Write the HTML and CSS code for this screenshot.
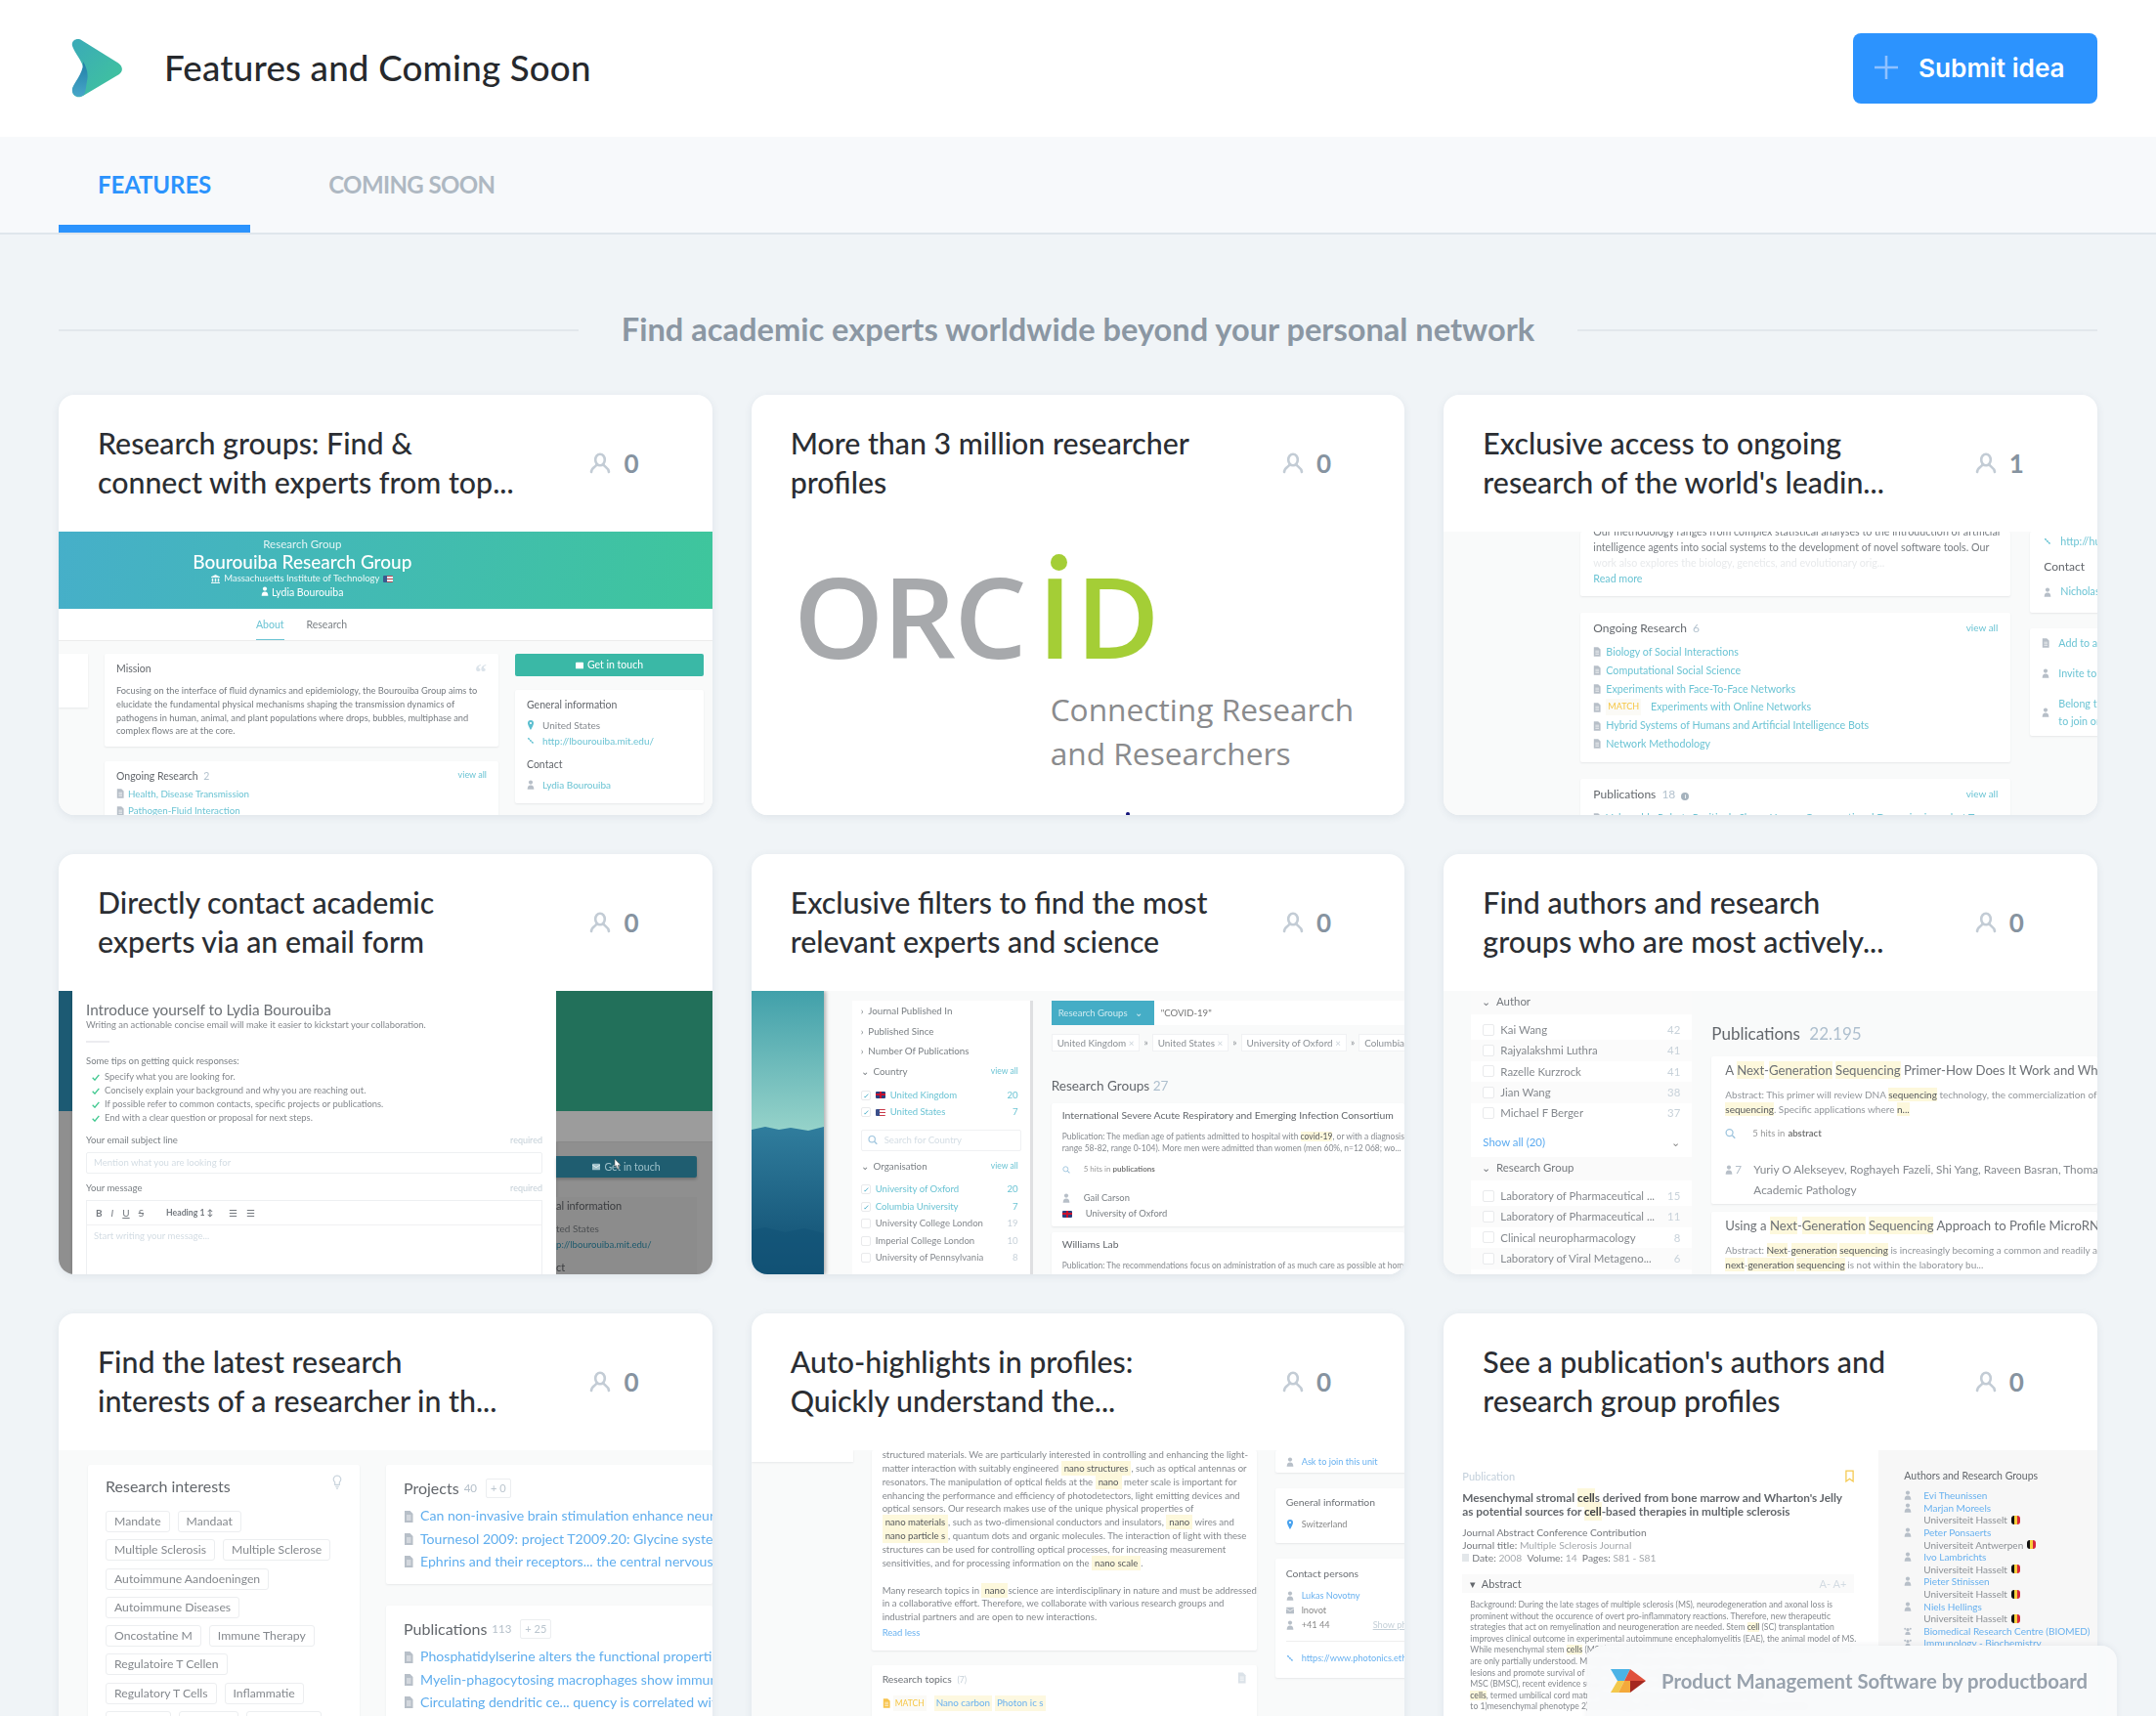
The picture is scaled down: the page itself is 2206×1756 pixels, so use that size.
FILE: index.html
```html
<!DOCTYPE html>
<html lang="en">
<head>
<meta charset="utf-8">
<title>Features and Coming Soon</title>
<link rel="stylesheet" href="styles.css">
</head>
<body>
<svg class="defs" width="0" height="0">
  <defs>
    <symbol id="i-vote" viewBox="0 0 22 22"><g fill="none" stroke="#c3ccd5" stroke-width="2.600" stroke-linecap="round"><ellipse cx="11" cy="7.500" rx="4.800" ry="5.800"/><path d="M7.500 12.500C6.500 15 2.500 15 2 20M14.500 12.500c1 2.500 5 2.500 5.500 7.500"/></g></symbol>
    <symbol id="i-person" viewBox="0 0 10 12"><circle cx="5" cy="3" r="2.600"/><path d="M.8 12c0-3.600 1.400-5.400 4.200-5.400S9.200 8.400 9.200 12z"/></symbol>
    <symbol id="i-doc" viewBox="0 0 10 12"><path d="M1 0h5.500L9.500 3v9H1z"/><path d="M3 5h4.500M3 7h4.500M3 9h4.500" stroke="#fff" stroke-width=".8"/></symbol>
    <symbol id="i-check" viewBox="0 0 12 10"><path d="M1 5.500 4.500 9 11 1" fill="none" stroke="#3fc88f" stroke-width="2"/></symbol>
    <symbol id="i-search" viewBox="0 0 12 12"><circle cx="5" cy="5" r="3.800" fill="none" stroke="#9fc5de" stroke-width="1.400"/><path d="m8 8 3.200 3.200" stroke="#9fc5de" stroke-width="1.600"/></symbol>
    <symbol id="i-pin" viewBox="0 0 8 12"><path d="M4 0a3.600 3.600 0 0 1 3.600 3.600C7.600 6.400 4 12 4 12S.4 6.400.4 3.600A3.600 3.600 0 0 1 4 0z"/><circle cx="4" cy="3.600" r="1.300" fill="#fff"/></symbol>
    <symbol id="i-link" viewBox="0 0 12 12"><path d="m2 2 8 8" fill="none" stroke="currentColor" stroke-width="2.200" stroke-dasharray="3 1"/></symbol>
    <symbol id="i-mail" viewBox="0 0 12 10"><rect width="12" height="10" rx="1"/><path d="m0 2 6 4 6-4" fill="none" stroke="#fff" stroke-width="1"/></symbol>
    <symbol id="i-bank" viewBox="0 0 12 12"><path d="M6 0l6 3v1H0V3zM1 5h2v5H1zM5 5h2v5H5zM9 5h2v5H9zM0 10.500h12V12H0z"/></symbol>
    <symbol id="i-group" viewBox="0 0 12 12"><circle cx="6" cy="4" r="2.400"/><circle cx="1.800" cy="2.500" r="1.500"/><circle cx="10.200" cy="2.500" r="1.500"/><path d="M2 12c0-3.600 1.400-5 4-5s4 1.400 4 5z"/></symbol>
  </defs>
</svg>

<header class="topbar">
  <div class="brand">
    <svg class="logo" viewBox="0 0 53 60" aria-hidden="true">
      <defs>
        <linearGradient id="lg1" x1="0" y1="0" x2="1" y2="1"><stop offset="0" stop-color="#3aaab8"/><stop offset="1" stop-color="#41c69a"/></linearGradient>
        <linearGradient id="lg2" x1="0" y1="0" x2="0" y2="1"><stop offset="0" stop-color="#1f7fa6"/><stop offset="1" stop-color="#48a6c9"/></linearGradient>
      </defs>
      <path fill="url(#lg1)" d="M2 7C.5 1.500 7-2 12 1.500L49 24.500c5 3.500 5 8.500 1 11.500L13 58c-5 3.500-12 0-11-7 1-4 9-12 11-20C14 24 4 14 2 7z"/>
      <path fill="url(#lg2)" d="M13 23c3 5 6 12 4 20-1 5-1 10-3 14-5 4-13 1-12-6 1-6 12-16 11-28z"/>
    </svg>
    <h1 class="page-title">Features and Coming Soon</h1>
  </div>
  <button class="submit" type="button">
    <svg class="plus" viewBox="0 0 24 24"><path d="M12 0v24M0 12h24" stroke="#8fc1ff" stroke-width="2.600" fill="none" stroke-linecap="round"/></svg>
    <span>Submit idea</span>
  </button>
</header>

<nav class="tabs">
  <a class="tab active">FEATURES</a>
  <a class="tab">COMING SOON</a>
</nav>

<main class="content">
  <div class="section-head">
    <span class="rule"></span>
    <h2>Find academic experts worldwide beyond your personal network</h2>
    <span class="rule"></span>
  </div>

  <section class="grid">

    <!-- 1 -->
    <article class="card">
      <div class="head">
        <h3>Research groups: Find &amp; connect with experts from top...</h3>
        <div class="vote"><svg class="vote-i"><use href="#i-vote"/></svg><b>0</b></div>
      </div>
      <div class="shot s1">
        <div class="s1-banner">
          <div class="s1-b1">Research Group</div>
          <div class="s1-b2">Bourouiba Research Group</div>
          <div class="s1-b3"><svg class="ic wh"><use href="#i-bank"/></svg> Massachusetts Institute of Technology <i class="flag us"></i></div>
          <div class="s1-b4"><svg class="ic wh"><use href="#i-person"/></svg> Lydia Bourouiba</div>
        </div>
        <div class="s1-tabs"><span class="on">About</span><span>Research</span></div>
        <div class="s1-body">
          <div class="stub"></div>
          <div class="col">
            <div class="c s1-mission">
              <div class="row-b"><span class="t">Mission</span><span class="quote">&#8220;</span></div>
              <p>Focusing on the interface of fluid dynamics and epidemiology, the Bourouiba Group aims to elucidate the fundamental physical mechanisms shaping the transmission dynamics of pathogens in human, animal, and plant populations where drops, bubbles, multiphase and complex flows are at the core.</p>
            </div>
            <div class="c s1-ongoing">
              <div class="row-b"><span class="t">Ongoing Research <em>2</em></span><span class="va">view all</span></div>
              <div class="li"><svg class="ic g"><use href="#i-doc"/></svg><a>Health, Disease Transmission</a></div>
              <div class="li"><svg class="ic g"><use href="#i-doc"/></svg><a>Pathogen-Fluid Interaction</a></div>
            </div>
          </div>
          <div class="col">
            <div class="s1-btn"><svg class="ic wh"><use href="#i-mail"/></svg> Get in touch</div>
            <div class="c s1-info">
              <div class="t">General information</div>
              <div class="li gap"><svg class="ic te"><use href="#i-pin"/></svg><span>United States</span></div>
              <div class="li gap"><svg class="ic te"><use href="#i-link"/></svg><a>http://lbourouiba.mit.edu/</a></div>
              <div class="t mt">Contact</div>
              <div class="li gap"><svg class="ic g"><use href="#i-person"/></svg><a>Lydia Bourouiba</a></div>
            </div>
          </div>
        </div>
      </div>
    </article>

    <!-- 2 -->
    <article class="card">
      <div class="head">
        <h3>More than 3 million researcher profiles</h3>
        <div class="vote"><svg class="vote-i"><use href="#i-vote"/></svg><b>0</b></div>
      </div>
      <div class="shot s2">
        <div class="orcid"><span class="o-g">ORC</span><span class="o-l">ID</span></div>
        <i class="orcid-i"></i>
        <div class="orcid-tag">Connecting Research<br>and Researchers</div>
        <i class="orcid-dot"></i>
      </div>
    </article>

    <!-- 3 -->
    <article class="card">
      <div class="head">
        <h3>Exclusive access to ongoing research of the world's leadin...</h3>
        <div class="vote"><svg class="vote-i"><use href="#i-vote"/></svg><b>1</b></div>
      </div>
      <div class="shot s3">
        <div class="col s3-main">
          <div class="c s3-top">
            <p>Our methodology ranges from complex statistical analyses to the introduction of artificial</p>
            <p>intelligence agents into social systems to the development of novel software tools. Our</p>
            <p class="fade">work also explores the biology, genetics, and evolutionary orig...</p>
            <p><a>Read more</a></p>
          </div>
          <div class="c s3-list">
            <div class="row-b"><span class="t">Ongoing Research <em>6</em></span><span class="va">view all</span></div>
            <div class="li"><svg class="ic g"><use href="#i-doc"/></svg><a>Biology of Social Interactions</a></div>
            <div class="li"><svg class="ic g"><use href="#i-doc"/></svg><a>Computational Social Science</a></div>
            <div class="li"><svg class="ic g"><use href="#i-doc"/></svg><a>Experiments with Face-To-Face Networks</a></div>
            <div class="li"><svg class="ic g"><use href="#i-doc"/></svg><span class="match">MATCH</span><a>Experiments with Online Networks</a></div>
            <div class="li"><svg class="ic g"><use href="#i-doc"/></svg><a>Hybrid Systems of Humans and Artificial Intelligence Bots</a></div>
            <div class="li"><svg class="ic g"><use href="#i-doc"/></svg><a>Network Methodology</a></div>
          </div>
          <div class="c s3-list">
            <div class="row-b"><span class="t">Publications <em>18</em> <i class="info">i</i></span><span class="va">view all</span></div>
            <div class="li"><svg class="ic g"><use href="#i-doc"/></svg><a>Vulnerable Robots Positively Shape Human Conversational Dynamics in a ...bot Team</a></div>
          </div>
        </div>
        <div class="col s3-side">
          <div class="c s3-s1">
            <div class="li"><svg class="ic te"><use href="#i-link"/></svg><a>http://human</a></div>
            <div class="t">Contact</div>
            <div class="li"><svg class="ic g"><use href="#i-person"/></svg><a>Nicholas</a></div>
          </div>
          <div class="c s3-s2">
            <div class="li"><svg class="ic g"><use href="#i-doc"/></svg><a>Add to a</a></div>
            <div class="li"><svg class="ic g"><use href="#i-person"/></svg><a>Invite to</a></div>
            <div class="li"><svg class="ic g"><use href="#i-person"/></svg><a>Belong to<br>to join or</a></div>
          </div>
        </div>
      </div>
    </article>

    <!-- 4 -->
    <article class="card">
      <div class="head">
        <h3>Directly contact academic experts via an email form</h3>
        <div class="vote"><svg class="vote-i"><use href="#i-vote"/></svg><b>0</b></div>
      </div>
      <div class="shot s4">
        <div class="s4-left"><div class="s4-lt"></div></div>
        <div class="s4-modal">
          <div class="s4-h">Introduce yourself to Lydia Bourouiba</div>
          <div class="s4-sub">Writing an actionable concise email will make it easier to kickstart your collaboration.</div>
          <div class="s4-sep"></div>
          <div class="s4-tips">Some tips on getting quick responses:</div>
          <div class="s4-tip"><svg class="ic"><use href="#i-check"/></svg>Specify what you are looking for.</div>
          <div class="s4-tip"><svg class="ic"><use href="#i-check"/></svg>Concisely explain your background and why you are reaching out.</div>
          <div class="s4-tip"><svg class="ic"><use href="#i-check"/></svg>If possible refer to common contacts, specific projects or publications.</div>
          <div class="s4-tip"><svg class="ic"><use href="#i-check"/></svg>End with a clear question or proposal for next steps.</div>
          <div class="s4-label"><span>Your email subject line</span><em>required</em></div>
          <div class="s4-input">Mention what you are looking for</div>
          <div class="s4-label s4-l2"><span>Your message</span><em>required</em></div>
          <div class="s4-editor">
            <div class="s4-tools"><b>B</b><i>I</i><u>U</u><s>S</s><span class="hd">Heading 1 &#8597;</span><span>&#9776;</span><span>&#9776;</span></div>
            <div class="s4-ph">Start writing your message...</div>
          </div>
        </div>
        <div class="s4-right">
          <div class="s4-green"></div>
          <div class="s4-gband"></div>
          <div class="s4-btn"><svg class="ic"><use href="#i-mail"/></svg> Get in touch</div>
          <div class="s4-info">
            <div class="a">al information</div>
            <div class="b">ted States</div>
            <div class="d">p://lbourouiba.mit.edu/</div>
            <div class="a e">ct</div>
          </div>
          <svg class="cursor" viewBox="0 0 10 14"><path d="M2 1v9l2-1 1 4 2-.5-1-4h3z" fill="#fff" stroke="#333" stroke-width=".6"/></svg>
        </div>
      </div>
    </article>

    <!-- 5 -->
    <article class="card">
      <div class="head">
        <h3>Exclusive filters to find the most relevant experts and science</h3>
        <div class="vote"><svg class="vote-i"><use href="#i-vote"/></svg><b>0</b></div>
      </div>
      <div class="shot s5">
        <div class="s5-photo">
          <svg viewBox="0 0 74 290" preserveAspectRatio="none">
            <defs>
              <linearGradient id="sky" x1="0" y1="0" x2="0" y2="1"><stop offset="0" stop-color="#41a0aa"/><stop offset="1" stop-color="#9ad5cb"/></linearGradient>
              <linearGradient id="mtn" x1="0" y1="0" x2="0" y2="1"><stop offset="0" stop-color="#307d9d"/><stop offset="1" stop-color="#0f4c6f"/></linearGradient>
            </defs>
            <rect width="74" height="150" fill="url(#sky)"/>
            <path fill="url(#mtn)" d="M0 142l14-3 14 3 12-2 18 3 16-4v151H0z"/>
            <path fill="#125478" opacity=".7" d="M0 245l14-3 20 5 20-4 20 5v42H0z"/>
          </svg>
        </div>
        <div class="s5-filter">
          <div class="s5-fh">&#8250;&ensp;Journal Published In</div>
          <div class="s5-fh">&#8250;&ensp;Published Since</div>
          <div class="s5-fh">&#8250;&ensp;Number Of Publications</div>
          <div class="s5-fh split"><span>&#8964;&ensp;Country</span><a>view all</a></div>
          <div class="s5-r on"><i class="cb on"></i><i class="flag uk"></i><a>United Kingdom</a><b>20</b></div>
          <div class="s5-r on"><i class="cb on"></i><i class="flag us"></i><a>United States</a><b>7</b></div>
          <div class="s5-search"><svg class="ic"><use href="#i-search"/></svg>Search for Country</div>
          <div class="s5-fh split"><span>&#8964;&ensp;Organisation</span><a>view all</a></div>
          <div class="s5-r on"><i class="cb on"></i><a>University of Oxford</a><b>20</b></div>
          <div class="s5-r on"><i class="cb on"></i><a>Columbia University</a><b>7</b></div>
          <div class="s5-r"><i class="cb"></i><span>University College London</span><b>19</b></div>
          <div class="s5-r"><i class="cb"></i><span>Imperial College London</span><b>10</b></div>
          <div class="s5-r"><i class="cb"></i><span>University of Pennsylvania</span><b>8</b></div>
        </div>
        <div class="s5-main">
          <div class="s5-bar"><span class="s5-sel">Research Groups &ensp;&#8964;</span><span class="s5-q">"COVID-19"</span></div>
          <div class="s5-chips"><span>United Kingdom <i>&#215;</i></span><em>&#187;</em><span>United States <i>&#215;</i></span><em>&#187;</em><span>University of Oxford <i>&#215;</i></span><em>&#187;</em><span>Columbia University</span></div>
          <div class="s5-h">Research Groups <em>27</em></div>
          <div class="c s5-card">
            <div class="s5-ct">International Severe Acute Respiratory and Emerging Infection Consortium</div>
            <p>Publication: The median age of patients admitted to hospital with <mark>covid-19</mark>, or with a diagnosis of<br>range 58-82, range 0-104). More men were admitted than women (men 60%, n=12 068; wo...</p>
            <div class="s5-hits"><svg class="ic"><use href="#i-search"/></svg><span>5 hits in <b>publications</b></span></div>
            <div class="s5-foot"><svg class="ic g"><use href="#i-person"/></svg>Gail Carson</div>
            <div class="s5-foot"><i class="flag uk"></i>University of Oxford</div>
          </div>
          <div class="c s5-card s5-c2">
            <div class="s5-ct">Williams Lab</div>
            <p>Publication: The recommendations focus on administration of as much care as possible at home</p>
          </div>
        </div>
      </div>
    </article>

    <!-- 6 -->
    <article class="card">
      <div class="head">
        <h3>Find authors and research groups who are most actively...</h3>
        <div class="vote"><svg class="vote-i"><use href="#i-vote"/></svg><b>0</b></div>
      </div>
      <div class="shot s6">
        <div class="s6-filter">
          <div class="s6-fh">&#8964;&ensp;Author</div>
          <div class="s6-rows">
            <div class="s6-r"><i class="cb"></i><span>Kai Wang</span><b>42</b></div>
            <div class="s6-r"><i class="cb"></i><span>Rajyalakshmi Luthra</span><b>41</b></div>
            <div class="s6-r"><i class="cb"></i><span>Razelle Kurzrock</span><b>41</b></div>
            <div class="s6-r"><i class="cb"></i><span>Jian Wang</span><b>38</b></div>
            <div class="s6-r"><i class="cb"></i><span>Michael F Berger</span><b>37</b></div>
          </div>
          <div class="s6-show"><a>Show all (20)</a><span>&#8964;</span></div>
          <div class="s6-fh">&#8964;&ensp;Research Group</div>
          <div class="s6-rows">
            <div class="s6-r"><i class="cb"></i><span>Laboratory of Pharmaceutical ...</span><b>15</b></div>
            <div class="s6-r"><i class="cb"></i><span>Laboratory of Pharmaceutical ...</span><b>11</b></div>
            <div class="s6-r"><i class="cb"></i><span>Clinical neuropharmacology</span><b>8</b></div>
            <div class="s6-r"><i class="cb"></i><span>Laboratory of Viral Metageno...</span><b>6</b></div>
          </div>
        </div>
        <div class="s6-main">
          <div class="s6-h">Publications <em>22.195</em></div>
          <div class="c s6-card">
            <div class="s6-t">A <mark>Next</mark>-<mark>Generation</mark> <mark>Sequencing</mark> Primer-How Does It Work and What Can It Tell Us</div>
            <p>Abstract: This primer will review DNA <mark>sequencing</mark> technology, the commercialization of next-generation<br><mark>sequencing</mark>. Specific applications where <mark>n...</mark></p>
            <div class="s6-hits"><svg class="ic"><use href="#i-search"/></svg>5 hits in <b>abstract</b></div>
            <div class="s6-foot"><span class="s6-n"><svg class="ic g"><use href="#i-person"/></svg>7</span>Yuriy O Alekseyev, Roghayeh Fazeli, Shi Yang, Raveen Basran, Thomas Maher</div>
            <div class="s6-foot s6-j">Academic Pathology</div>
          </div>
          <div class="c s6-card s6-c2">
            <div class="s6-t">Using a <mark>Next</mark>-<mark>Generation</mark> <mark>Sequencing</mark> Approach to Profile MicroRNA from Human</div>
            <p>Abstract: <mark>Next</mark>-<mark>generation</mark> <mark>sequencing</mark> is increasingly becoming a common and readily accessible<br><mark>next</mark>-<mark>generation</mark> <mark>sequencing</mark> is not within the laboratory bu...</p>
          </div>
        </div>
      </div>
    </article>

    <!-- 7 -->
    <article class="card">
      <div class="head">
        <h3>Find the latest research interests of a researcher in th...</h3>
        <div class="vote"><svg class="vote-i"><use href="#i-vote"/></svg><b>0</b></div>
      </div>
      <div class="shot s7">
        <div class="c s7-int">
          <div class="row-b"><span class="s7-t">Research interests</span><svg class="s7-bulb" viewBox="0 0 10 16"><path d="M5 1a4 4 0 0 1 2.500 7.100V11h-5V8.100A4 4 0 0 1 5 1zM3 13h4M4 15h2" fill="none" stroke="#c8d3dc" stroke-width="1.200"/></svg></div>
          <div class="s7-chips">
            <span>Mandate</span><span>Mandaat</span><span>Multiple Sclerosis</span><span>Multiple Sclerose</span><span>Autoimmune Aandoeningen</span><span>Autoimmune Diseases</span><span>Oncostatine M</span><span>Immune Therapy</span><span>Regulatoire T Cellen</span><span>Regulatory T Cells</span><span>Inflammatie</span><span>Microglia</span><span>Myeline</span><span>Astrocyten</span>
          </div>
        </div>
        <div class="col s7-main">
          <div class="c s7-card">
            <div class="s7-h">Projects <em>40</em> <i>+ 0</i></div>
            <div class="s7-l"><svg class="ic g"><use href="#i-doc"/></svg><a>Can non-invasive brain stimulation enhance neural recovery</a></div>
            <div class="s7-l"><svg class="ic g"><use href="#i-doc"/></svg><a>Tournesol 2009: project T2009.20: Glycine system in the brain</a></div>
            <div class="s7-l"><svg class="ic g"><use href="#i-doc"/></svg><a>Ephrins and their receptors... the central nervous system</a></div>
          </div>
          <div class="c s7-card">
            <div class="s7-h">Publications <em>113</em> <i>+ 25</i></div>
            <div class="s7-l"><svg class="ic g"><use href="#i-doc"/></svg><a>Phosphatidylserine alters the functional properties of cells</a></div>
            <div class="s7-l"><svg class="ic g"><use href="#i-doc"/></svg><a>Myelin-phagocytosing macrophages show immune suppression</a></div>
            <div class="s7-l"><svg class="ic g"><use href="#i-doc"/></svg><a>Circulating dendritic ce... quency is correlated with disease</a></div>
          </div>
        </div>
      </div>
    </article>

    <!-- 8 -->
    <article class="card">
      <div class="head">
        <h3>Auto-highlights in profiles: Quickly understand the...</h3>
        <div class="vote"><svg class="vote-i"><use href="#i-vote"/></svg><b>0</b></div>
      </div>
      <div class="shot s8">
        <div class="stub s8-stub"></div>
        <div class="col s8-main">
          <div class="c s8-text">
            <p>structured materials. We are particularly interested in controlling and enhancing the light-<br>matter interaction with suitably engineered <mark>nano structures</mark>, such as optical antennas or<br>resonators. The manipulation of optical fields at the <mark>nano</mark> meter scale is important for<br>enhancing the performance and efficiency of photodetectors, light emitting devices and<br>optical sensors. Our research makes use of the unique physical properties of<br><mark>nano materials</mark>, such as two-dimensional conductors and insulators, <mark>nano</mark> wires and<br><mark>nano particle s</mark>, quantum dots and organic molecules. The interaction of light with these<br>structures can be used for controlling optical processes, for increasing measurement<br>sensitivities, and for processing information on the <mark>nano scale</mark>.</p>
            <p class="s8-p2">Many research topics in <mark>nano</mark>science are interdisciplinary in nature and must be addressed<br>in a collaborative effort. Therefore, we collaborate with various research groups and<br>industrial partners and are open to new interactions.</p>
            <a class="s8-less">Read less</a>
          </div>
          <div class="c s8-topics">
            <div class="row-b"><span class="s8-t">Research topics <em>(7)</em></span><svg class="ic s8-doc"><use href="#i-doc"/></svg></div>
            <div class="s8-tags"><svg class="ic y"><use href="#i-doc"/></svg><span class="match">MATCH</span><mark>Nano carbon</mark><mark>Photon ic s</mark></div>
          </div>
        </div>
        <div class="col s8-side">
          <div class="c s8-a"><svg class="ic g"><use href="#i-person"/></svg><a>Ask to join this unit</a></div>
          <div class="c s8-b">
            <div class="s8-t">General information</div>
            <div class="s8-r"><svg class="ic bl"><use href="#i-pin"/></svg><span>Switzerland</span></div>
          </div>
          <div class="c s8-c">
            <div class="s8-t">Contact persons</div>
            <div class="s8-r"><svg class="ic g"><use href="#i-person"/></svg><a>Lukas Novotny</a></div>
            <div class="s8-r"><svg class="ic g"><use href="#i-mail"/></svg><span>lnovot</span></div>
            <div class="s8-r"><svg class="ic g"><use href="#i-person"/></svg><span>+41 44</span><em>Show pho</em></div>
            <div class="s8-hr"></div>
            <div class="s8-r"><svg class="ic g"><use href="#i-link"/></svg><a>https://www.photonics.ethz.ch</a></div>
          </div>
        </div>
      </div>
    </article>

    <!-- 9 -->
    <article class="card">
      <div class="head">
        <h3>See a publication's authors and research group profiles</h3>
        <div class="vote"><svg class="vote-i"><use href="#i-vote"/></svg><b>0</b></div>
      </div>
      <div class="shot s9">
        <div class="s9-main">
          <div class="s9-k">Publication<svg class="s9-bm" viewBox="0 0 10 14"><path d="M1 1h8v12L5 10l-4 3z" fill="none" stroke="#f5c94e" stroke-width="1.400"/></svg></div>
          <div class="s9-t">Mesenchymal stromal <mark>cell</mark>s derived from bone marrow and Wharton's Jelly<br>as potential sources for <mark>cell</mark>-based therapies in multiple sclerosis</div>
          <div class="s9-m">Journal Abstract Conference Contribution</div>
          <div class="s9-m">Journal title: <span>Multiple Sclerosis Journal</span></div>
          <div class="s9-m"><i class="cal"></i>Date: <span>2008</span>&ensp;Volume: <span>14</span>&ensp;Pages: <span>S81 - S81</span></div>
          <div class="s9-ab"><span>&#9662;&ensp;Abstract</span><em>A- A+</em></div>
          <p>Background: During the late stages of multiple sclerosis (MS), neurodegeneration and axonal loss is<br>prominent without the occurence of overt pro-inflammatory reactions. Therefore, new therapeutic<br>strategies that act on remyelination and neurogeneration are needed. Stem <mark>cell</mark> (SC) transplantation<br>improves clinical outcome in experimental autoimmune encephalomyelitis (EAE), the animal model of MS.<br>While mesenchymal stem <mark>cells</mark> (MSC) are described as, its immunomodulatory, the mechanisms involved<br>are only partially understood. Moreover, MSC have been shown to integrate into<br>lesions and promote survival of both neurons and oligodendrocytes, umbilical cord<br>MSC (BMSC), recent evidence suggests that other sources are also possible.<br><mark>cells</mark>, termed umbilical cord matrix, have been shown to express CD90 and SSEA<br>to 1)mesenchymal phenotype 2)multi-lineage differentiation 3)immunosuppressive potential</p>
        </div>
        <div class="s9-side">
          <div class="s9-h">Authors and Research Groups</div>
          <div class="s9-a"><svg class="ic g"><use href="#i-person"/></svg><a>Evi Theunissen</a></div>
          <div class="s9-a"><svg class="ic g"><use href="#i-person"/></svg><a>Marjan Moreels</a></div>
          <div class="s9-u">Universiteit Hasselt <i class="flag be"></i></div>
          <div class="s9-a"><svg class="ic g"><use href="#i-person"/></svg><a>Peter Ponsaerts</a></div>
          <div class="s9-u">Universiteit Antwerpen <i class="flag be"></i></div>
          <div class="s9-a"><svg class="ic g"><use href="#i-person"/></svg><a>Ivo Lambrichts</a></div>
          <div class="s9-u">Universiteit Hasselt <i class="flag be"></i></div>
          <div class="s9-a"><svg class="ic g"><use href="#i-person"/></svg><a>Pieter Stinissen</a></div>
          <div class="s9-u">Universiteit Hasselt <i class="flag be"></i></div>
          <div class="s9-a"><svg class="ic g"><use href="#i-person"/></svg><a>Niels Hellings</a></div>
          <div class="s9-u">Universiteit Hasselt <i class="flag be"></i></div>
          <div class="s9-a"><svg class="ic g"><use href="#i-group"/></svg><a>Biomedical Research Centre (BIOMED)</a></div>
          <div class="s9-a"><svg class="ic g"><use href="#i-group"/></svg><a>Immunology - Biochemistry</a></div>
        </div>
      </div>
    </article>
  </section>
</main>

<aside class="pb-badge">
  <svg class="pb-logo" viewBox="0 0 36 24">
    <path fill="#4cb3e6" d="M0 0h20L14 12H7z"/>
    <path fill="#f3c94d" d="M7 12h7L8 24H0z"/>
    <path fill="#f4a93a" d="M14 12h6v12H8z"/>
    <path fill="#e0503c" d="M20 0l16 12H14z"/>
    <path fill="#a5281f" d="M20 12h16L20 24z"/>
  </svg>
  <span>Product Management Software by productboard</span>
</aside>
</body>
</html>
```
FILE: styles.css
```css
* { box-sizing: border-box; }
html, body { margin: 0; height: 1756px; overflow: hidden; }
body { background: #f0f4f7; font-family: "Lato", "Open Sans", sans-serif; color: #2b2e33; position: relative; }
.defs { position: absolute; }
p { margin: 0; }
h1, h2, h3 { margin: 0; }
mark { background: #fdf8dc; color: inherit; }
em { font-style: normal; }

/* top */
.topbar { height: 140px; background: #fff; display: flex; align-items: center; justify-content: space-between; padding: 0 60px 0 72px; }
.brand { display: flex; align-items: center; gap: 43px; }
.logo { width: 53px; height: 60px; }
.page-title { font-size: 36.700px; font-weight: 500; color: #26292d; letter-spacing: .2px; margin-bottom: 2px; }
.submit { width: 250px; height: 72px; border: 0; border-radius: 8px; background: #2c93fe; color: #fff; display: flex; align-items: center; gap: 21px; padding: 0 0 2px 22px; font: 600 26.200px "Inter", sans-serif; }
.plus { width: 24px; height: 24px; }

.tabs { height: 100px; background: #f7f9fb; border-bottom: 2px solid #dfe6ec; padding-left: 60px; display: flex; gap: 40px; }
.tab { height: 98px; padding: 6px 40px 0; display: flex; align-items: center; font-size: 24px; font-weight: 700; color: #aeb8c2; letter-spacing: -.6px; border-bottom: 8px solid transparent; }
.tab.active { color: #2b93fd; border-bottom-color: #2b93fd; letter-spacing: -.1px; }

.content { padding: 0 60px; }
.section-head { height: 164px; display: flex; align-items: center; gap: 44px; padding-top: 28px; }
.section-head h2 { font-size: 32.600px; font-weight: 700; color: #8b97a3; white-space: nowrap; }
.rule { flex: 1; height: 2px; background: #e2e7ec; margin-top: 4px; }

.grid { display: grid; grid-template-columns: repeat(3, 1fr); gap: 40px; }
.card { height: 430px; background: #fff; border-radius: 16px; overflow: hidden; box-shadow: 0 2px 8px rgba(60,80,100,.09); display: flex; flex-direction: column; }
.head { height: 140px; flex: none; display: flex; align-items: center; padding-left: 40px; }
.head h3 { width: 431px; margin: 0 40px 3px 0; font-size: 30.300px; line-height: 40px; font-weight: 500; color: #2b2e33; }
.vote { width: 115px; display: flex; align-items: center; justify-content: center; gap: 13px; }
.vote-i { width: 22px; height: 22px; }
.vote b { font-size: 26px; font-weight: 700; color: #8693a0; }

/* screenshots */
.shot { flex: 1; min-height: 0; overflow: hidden; background: #f9fafa; filter: blur(.5px); position: relative; font-size: 10px; color: #7b8085; white-space: nowrap; line-height: 1.2; }
.c { background: #fff; box-shadow: 0 1px 2px rgba(70,80,90,.1); border-radius: 2px; }
.col { display: flex; flex-direction: column; min-width: 0; }
.col > * { flex: none; }
.stub { background: #fff; box-shadow: 0 1px 2px rgba(70,80,90,.1); }
.ic { width: 8px; height: 10px; flex: none; fill: #b8c2cc; }
.ic.g { fill: #b7bfc8; }
.ic.wh { fill: #fff; }
.ic.te { fill: #5dbfd0; color: #5dbfd0; }
.ic.bl { fill: #48a2ee; }
.ic.y { fill: #f7c34c; }
a { color: inherit; }
.t { color: #63676c; font-size: 10.500px; }
.t em, .row-b em { color: #b4c3cf; margin-left: 3px; }
.row-b { display: flex; justify-content: space-between; align-items: flex-start; }
.va { color: #6cc4d4; font-size: 9px; }
.li { display: flex; align-items: center; gap: 4px; color: #6cc4d4; }
.li span { color: #858a8f; }
.flag { display: inline-block; width: 10px; height: 7px; border-radius: 1px; vertical-align: middle; flex: none; }
.flag.us { background: linear-gradient(90deg, #3a4f8a 45%, transparent 45%), repeating-linear-gradient(180deg, #c7394a 0 1.400px, #fff 1.400px 2.800px); }
.flag.uk { background: linear-gradient(90deg, transparent 40%, #c8102e 40% 60%, transparent 60%), linear-gradient(180deg, #c8102e 0 0) center / 100% 30% no-repeat, #2b3f7e; }
.flag.be { width: 9px; height: 9px; border-radius: 3px; background: linear-gradient(90deg, #111 33%, #f7cf3d 33% 66%, #d8263a 66%); }
.cb { display: inline-block; width: 10px; height: 10px; background: #fff; border: 1px solid #e9eaec; border-radius: 2px; flex: none; }
.cb.on::after { content: "\2713"; display: block; font-size: 7px; line-height: 8px; text-align: center; color: #3fa9c5; }
.match { color: #f6c644 !important; background: #fbfaf6; font-size: 9px; padding: 3px 2px; margin-right: 5px; }
.quote { font: 700 24px/18px "Liberation Serif", serif; color: #dbe3ea; }
.info { display: inline-block; width: 8px; height: 8px; margin-left: 3px; border-radius: 50%; background: #a5b2bd; color: #fff; font: 700 6px/8px "Lato", sans-serif; text-align: center; }

/* s1 */
.s1-banner { height: 79px; padding: 6px 170px 0 0; background: linear-gradient(100deg, #46afc9 0%, #3ec69c 100%); color: #fff; text-align: center; display: flex; flex-direction: column; align-items: center; }
.s1-b1 { font-size: 11.500px; line-height: 14px; opacity: .85; }
.s1-b2 { font-size: 19px; line-height: 21px; font-weight: 500; }
.s1-b3 { font-size: 9.500px; line-height: 14px; opacity: .9; display: flex; align-items: center; gap: 4px; }
.s1-b3 .ic { width: 9px; height: 9px; }
.s1-b4 { font-size: 10.500px; line-height: 14px; }
.s1-tabs { height: 33px; background: #fff; border-bottom: 1px solid #ececec; display: flex; gap: 23px; padding-left: 202px; align-items: center; font-size: 10.500px; color: #7b8085; }
.s1-tabs .on { color: #6cc4d4; border-bottom: 1px solid #6cc4d4; height: 32px; line-height: 32px; }
.s1-body { display: grid; grid-template-columns: 30px 403px 193px; gap: 17px; padding-top: 13px; }
.s1-body > .stub { height: 55px; }
.s1-mission { height: 95px; padding: 9px 12px; }
.s1-mission .row-b { height: 13px; }
.s1-mission p { margin-top: 9px; font-size: 9.250px; line-height: 13.800px; white-space: normal; color: #777c81; }
.s1-ongoing { margin-top: 15px; height: 80px; padding: 9px 12px; }
.s1-ongoing .li { margin-top: 6px; font-size: 9.800px; }
.s1-btn { height: 23px; background: #3ab8a6; color: #fff; border-radius: 2px; display: flex; align-items: center; justify-content: center; gap: 4px; font-size: 10.500px; }
.s1-info { margin-top: 14px; height: 116px; padding: 9px 12px; }
.s1-info .li { margin-top: 8px; font-size: 10px; }
.s1-info .li + .li { margin-top: 4px; }
.s1-info .gap { gap: 8px; }
.s1-info .mt { margin-top: 12px; }
.s1-info .mt + .li { margin-top: 9px; }

/* s2 */
.s2 { background: #fff; filter: blur(.7px); font-family: "Open Sans", sans-serif; display: flex; flex-direction: column; padding: 0 0 0 43px; }
.orcid { font-size: 114px; line-height: 120px; margin-top: 26px; font-weight: 600; height: 118px; transform: scaleX(1.03); transform-origin: 0 0; }
.o-g { color: #a7a9ac; letter-spacing: -1.500px; }
.o-l { color: #a4ce36; letter-spacing: 3px; margin-left: 12px; }
.orcid-i { position: absolute; left: 306px; top: 23px; width: 17px; height: 17px; border-radius: 50%; background: #a4ce36; }
.orcid-tag { margin: 15px 0 0 263px; font-size: 31.700px; line-height: 45px; color: #8a8b8d; }
.orcid-dot { position: absolute; left: 383px; top: 287px; width: 4px; height: 4px; border-radius: 50%; background: #12127a; }

/* s3 */
.s3 { display: flex; padding-left: 140px; gap: 20px; font-size: 10.700px; }
.s3-main { width: 440px; flex: none; gap: 17px; }
.s3-top { height: 66px; padding: 0 13px; }
.s3-top p { line-height: 16px; font-size: 10.700px; color: #777c81; }
.s3-top p:first-child { margin-top: -8px; }
.s3-top p a { color: #6cc4d4; }
.s3-top .fade { color: #e8eaec; }
.s3-list { padding: 9px 13px 9px; }
.s3-list .t, .s3-side .t { font-size: 12px; }
.s3-list .va { font-size: 10px; }
.s3-list .li { height: 18.800px; gap: 5px; }
.s3-list .row-b { margin-bottom: 4px; height: 18px; }
.s3-side { width: 110px; flex: none; gap: 16px; }
.s3-s1 { height: 83px; padding: 4px 14px; display: flex; flex-direction: column; gap: 12px; }
.s3-s1 .li, .s3-s2 .li { gap: 9px; }
.s3-s2 { padding: 6px 12px; display: flex; flex-direction: column; gap: 13px; }
.s3-s2 a { line-height: 18px; }

/* s4 */
.s4 { display: flex; background: #8f8f8f; }
.s4-left { width: 14px; flex: none; }
.s4-lt { height: 123px; background: #1c5a73; }
.s4-modal { width: 495px; flex: none; background: #fff; padding: 11px 14px 0; color: #85898e; position: relative; box-shadow: 0 0 3px rgba(0,0,0,.2); }
.s4-h { font-size: 15.300px; line-height: 16px; color: #6d7176; }
.s4-sub { font-size: 9.400px; line-height: 14px; margin-top: 1px; }
.s4-sep { width: 24px; height: 2px; background: #ececf0; margin-top: 9px; }
.s4-tips { font-size: 9.500px; line-height: 14px; margin: 12px 0 2px; color: #7b8085; }
.s4-tip { font-size: 9.400px; line-height: 14px; display: flex; align-items: center; gap: 5px; padding-left: 6px; }
.s4-tip .ic { width: 8px; height: 7px; }
.s4-label { display: flex; justify-content: space-between; font-size: 9.600px; margin-top: 9px; color: #7b8085; line-height: 14px; }
.s4-label em { color: #c5d0d8; font-size: 9px; }
.s4-input { height: 22px; border: 1px solid #eef0f2; border-radius: 2px; margin-top: 5px; padding: 0 7px; line-height: 20px; color: #d4dde4; font-size: 9.600px; }
.s4-l2 { margin-top: 8px; }
.s4-editor { margin-top: 5px; border: 1px solid #eef0f2; height: 90px; }
.s4-tools { height: 25px; border-bottom: 1px solid #f0f0f2; display: flex; align-items: center; gap: 9px; padding: 0 9px; font-size: 10px; color: #757a80; }
.s4-tools .hd { margin: 0 7px 0 14px; font-weight: 700; font-size: 8.700px; }
.s4-ph { padding: 5px 7px; color: #d4dde4; font-size: 9.600px; }
.s4-right { flex: 1; position: relative; color: #3f4245; font-size: 11px; }
.s4-green { height: 123px; background: #22705a; }
.s4-gband { height: 32px; background: #9c9c9c; border-bottom: 1px solid #8a8a8a; }
.s4-btn { height: 22px; width: 144px; margin-top: 14px; background: #1f5d70; border-radius: 0 2px 2px 0; color: #9ec0c9; display: flex; align-items: center; justify-content: center; gap: 4px; font-size: 10.500px; box-shadow: 0 2px 3px rgba(0,0,0,.2); }
.s4-btn .ic { fill: #9ec0c9; }
.s4-info { width: 144px; height: 100px; margin-top: 20px; padding-top: 2px; background: #8c8c8c; }
.s4-info .a { line-height: 14px; color: #3a3c3f; }
.s4-info .b { line-height: 14px; margin-top: 9px; color: #4c4f52; font-size: 10px; }
.s4-info .d { line-height: 14px; margin-top: 3px; color: #1d5a6d; font-size: 9.600px; }
.s4-info .e { margin-top: 9px; }
.cursor { position: absolute; left: 58px; top: 171px; width: 9px; height: 12px; }

/* s5 */
.s5 { display: flex; font-size: 10px; }
.s5-photo { width: 74px; flex: none; box-shadow: 2px 0 4px rgba(0,0,0,.3); }
.s5-photo svg { display: block; width: 100%; height: 100%; }
.s5-filter { width: 185px; flex: none; margin: 10px 0 0 29px; background: #fff; border-right: 3px solid #dedfe1; padding: 0 9px; color: #85898e; }
.s5-fh { height: 20.700px; line-height: 20px; color: #7b8085; font-size: 9.800px; }
.split, .s5-r { display: flex; justify-content: space-between; align-items: center; }
.split a { color: #6cc4d4; font-size: 8.500px; padding-right: 3px; }
.s5-fh.split { margin-bottom: 5px; }
.s5-r { height: 17.500px; gap: 5px; font-size: 9.600px; justify-content: flex-start; }
.s5-r b { margin-left: auto; font-weight: 400; color: #c8d2da; padding-right: 3px; }
.s5-r.on a, .s5-r.on b { color: #6cc4d4; }
.s5-search { height: 22px; margin: 9px 0 5px; border: 1px solid #f0f1f3; border-radius: 2px; display: flex; align-items: center; gap: 7px; padding: 0 6px; color: #d4dde4; font-size: 9.600px; }
.s5-search .ic { width: 10px; height: 11px; }
.s5-main { flex: 1; min-width: 0; margin: 10px 0 0 19px; }
.s5-bar { height: 25px; display: flex; background: #fff; }
.s5-sel { width: 105px; background: #45adc6; color: #cfeaf0; display: flex; align-items: center; padding-left: 7px; font-size: 9.600px; }
.s5-q { padding-left: 7px; line-height: 25px; color: #777; font-size: 9.600px; }
.s5-chips { margin-top: 9px; display: flex; align-items: center; gap: 4px; font-size: 9.900px; color: #8b9095; }
.s5-chips span { height: 18px; line-height: 16px; background: #fff; border: 1px solid #f0f1f3; padding: 0 5px; }
.s5-chips i { color: #cbd3da; font-style: normal; }
.s5-h { margin-top: 26px; font-size: 13.600px; line-height: 18px; color: #63676c; }
.s5-h em { color: #aebfce; }
.s5-card { margin-top: 9px; height: 126px; padding: 5px 11px; }
.s5-ct { font-size: 10.400px; line-height: 15px; color: #63676c; }
.s5-card p { font-size: 8.500px; line-height: 12px; margin-top: 8px; color: #878b90; }
.s5-card p mark { color: #55585c; }
.s5-hits { display: flex; align-items: center; gap: 14px; margin-top: 10px; font-size: 8px; color: #999; height: 12px; }
.s5-hits b { color: #777; }
.s5-foot { display: flex; gap: 14px; align-items: center; height: 16px; font-size: 9.400px; }
.s5-hits + .s5-foot { margin-top: 15px; }
.s5-c2 { margin-top: 6px; }

/* s6 */
.s6 { display: flex; padding-left: 28px; font-size: 11.400px; }
.s6-filter { width: 226px; flex: none; background: #fff; color: #85898e; }
.s6-fh { height: 24px; background: #fafafa; padding-left: 11px; line-height: 22px; font-size: 11.400px; color: #75797e; }
.s6-rows { padding: 5px 0 0; }
.s6-r { height: 21.400px; display: flex; align-items: center; gap: 6px; padding: 0 12px; }
.s6-r:nth-child(even) { background: #fbfbfb; }
.s6-r .cb { width: 12px; height: 12px; }
.s6-r b { margin-left: auto; font-weight: 400; color: #c8d2da; }
.s6-show { height: 34px; padding: 12px 12px 0; display: flex; justify-content: space-between; color: #888; }
.s6-show a { color: #5cabf0; }
.s6-main { flex: 1; min-width: 0; padding: 33px 0 0 20px; }
.s6-h { font-size: 17px; line-height: 22px; color: #63676c; }
.s6-h em { color: #aebfce; margin-left: 5px; }
.s6-card { margin-top: 12px; height: 151px; padding: 5px 14px; }
.s6-t { font-size: 13.150px; line-height: 18px; color: #6d7176; }
.s6-t mark, .s6-card p mark { padding: 1px 0; }
.s6-card p { font-size: 10px; line-height: 14.500px; margin-top: 9px; color: #92969b; }
.s6-card p mark { color: #55585c; }
.s6-hits { display: flex; align-items: center; margin-top: 11px; font-size: 9.500px; color: #999; height: 14px; }
.s6-hits .ic { width: 11px; height: 12px; margin-right: 17px; }
.s6-hits b { color: #777; margin-left: 3px; }
.s6-foot { margin-top: 22px; font-size: 11.800px; line-height: 16px; color: #85898e; display: flex; }
.s6-n { width: 29px; flex: none; color: #b5c0ca; display: flex; gap: 2px; align-items: center; }
.s6-j { margin-top: 5px; padding-left: 29px; }
.s6-c2 { margin-top: 8px; }

/* s7 */
.s7 { display: flex; padding: 15px 0 0 30px; gap: 27px; }
.s7-int { width: 278px; flex: none; height: 300px; padding: 13px 18px; }
.s7-t { font-size: 16px; line-height: 18px; color: #63676c; }
.s7-bulb { width: 10px; height: 15px; margin-top: -3px; }
.s7-chips { display: flex; flex-wrap: wrap; gap: 7.300px 8px; margin-top: 16px; }
.s7-chips span { height: 22px; line-height: 20px; padding: 0 8px; border: 1px solid #eceef0; border-radius: 3px; font-size: 12.200px; color: #85898e; }
.s7-main { flex: 1; gap: 22px; }
.s7-card { height: 122px; padding: 14px 18px; }
.s7-h { font-size: 16px; line-height: 18px; color: #63676c; display: flex; gap: 5px; align-items: center; }
.s7-h em { color: #b5c0ca; font-size: 11.500px; }
.s7-h i { font-style: normal; font-size: 11px; color: #bac5ce; border: 1px solid #eceef0; padding: 0 4px; margin-left: 4px; border-radius: 2px; }
.s7-l { display: flex; align-items: center; gap: 7px; height: 23.400px; font-size: 14.100px; color: #60aeee; }
.s7-h + .s7-l { margin-top: 7px; }
.s7-l .ic { width: 10px; height: 12px; }

/* s8 */
.s8 { display: flex; gap: 19px; font-size: 9.500px; }
.s8-stub { width: 104px; height: 12px; flex: none; }
.s8-main { width: 394px; flex: none; gap: 15px; }
.s8-text { height: 205px; padding: 0 11px; }
.s8-text p { font-size: 9.600px; line-height: 13.850px; margin-top: -2px; color: #85898e; }
.s8-text mark { color: #55585c; padding: 2px 3px; }
.s8-text .s8-p2 { margin-top: 14px; }
.s8-less { display: block; margin-top: 3px; color: #6ab2f0; }
.s8-topics { padding: 7px 11px; height: 90px; }
.s8-doc { width: 9px; height: 12px; fill: #dbe2e8; }
.s8-t { font-size: 10.400px; line-height: 15px; color: #6d7176; }
.s8-t em { color: #c5d0d8; font-size: 8.500px; }
.s8-tags { display: flex; align-items: center; gap: 3px; margin-top: 8px; font-size: 9.800px; color: #6ab2f0; }
.s8-tags mark { padding: 2px 2px; background: #fdf8e0; color: #6ab2f0; }
.s8-tags .match { margin-right: 5px; font-size: 8.500px; }
.s8-side { width: 160px; flex: none; gap: 16px; }
.s8-a { height: 23px; display: flex; align-items: center; gap: 8px; padding: 0 11px; color: #6ab2f0; font-size: 9.200px; }
.s8-b { height: 56px; padding: 7px 11px; }
.s8-c { height: 122px; padding: 8px 11px; }
.s8-r { display: flex; align-items: center; gap: 8px; height: 15px; color: #6ab2f0; font-size: 9.200px; }
.s8-t + .s8-r { margin-top: 7px; }
.s8-r span { color: #888; }
.s8-r em { margin-left: 36px; color: #c5d0d8; text-decoration: underline; }
.s8-hr { height: 1px; background: #eee; margin: 9px 0; }

/* s9 */
.s9 { display: flex; background: #fff; font-size: 10px; }
.s9-main { width: 445px; flex: none; padding: 20px 25px 0 19px; }
.s9-k { display: flex; justify-content: space-between; font-size: 11px; line-height: 14px; color: #c3d0db; }
.s9-bm { width: 9px; height: 13px; }
.s9-t { font-size: 11.800px; line-height: 14px; font-weight: 700; margin-top: 8px; color: #63676c; }
.s9-t mark { padding: 2px 0; color: #3d3f42; }
.s9-m { font-size: 10.300px; line-height: 13px; color: #76797e; }
.s9-m span { color: #a5a9ad; }
.s9-t + .s9-m { margin-top: 8px; }
.cal { display: inline-block; width: 7px; height: 8px; background: #e3e7ea; margin-right: 3px; }
.s9-ab { height: 19px; margin: 10px 0 7px; background: #fafafa; padding: 0 8px; display: flex; align-items: center; justify-content: space-between; font-size: 11px; color: #63676c; }
.s9-ab em { color: #d3dbe2; }
.s9 p { font-size: 8.600px; line-height: 11.600px; padding-left: 8px; color: #85898e; }
.s9 p mark { color: #55585c; }
.s9-side { flex: 1; background: #f7f7f7; padding: 19px 0 0 26px; font-size: 10px; }
.s9-h { font-size: 10.500px; line-height: 14px; margin-bottom: 7px; color: #63676c; }
.s9-a, .s9-u { display: flex; align-items: center; height: 12.600px; gap: 12px; color: #68b1ef; }
.s9-u { padding-left: 20px; color: #8c9095; gap: 4px; }

/* badge */
.pb-badge { position: absolute; left: 1624px; top: 1684px; width: 542px; height: 90px; border-radius: 16px 16px 0 0; background: rgba(249,250,251,.94); backdrop-filter: blur(3px); box-shadow: 0 -1px 6px rgba(60,80,100,.08); display: flex; align-items: flex-start; padding: 24px 0 0 24px; gap: 16px; font-size: 20.300px; font-weight: 700; color: #98a2ad; white-space: nowrap; }
.pb-logo { width: 36px; height: 24px; flex: none; }
.pb-badge span { line-height: 26px; margin-top: -1px; }
```
